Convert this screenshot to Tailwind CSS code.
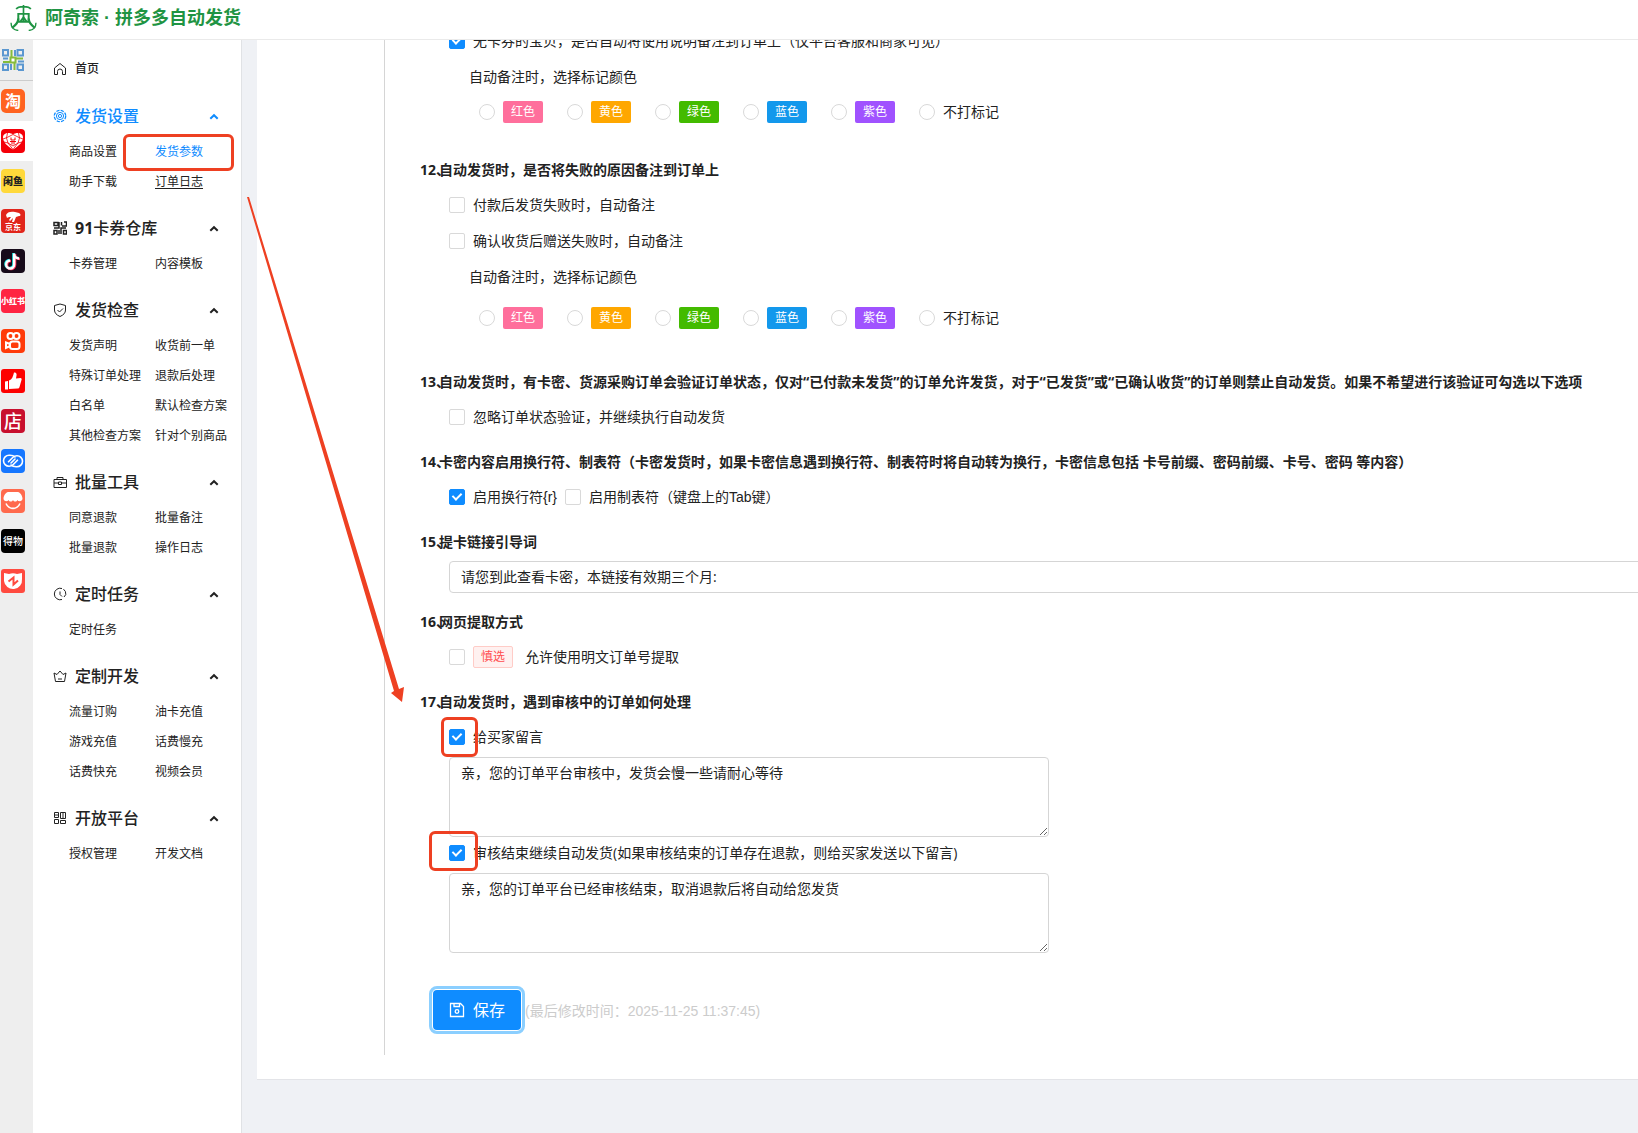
<!DOCTYPE html>
<html lang="zh-CN">
<head>
    <meta charset="UTF-8">
    <meta name="viewport" content="width=device-width, initial-scale=1.0">
    <title>阿奇索 · 拼多多自动发货</title>
    <script src="https://cdn.jsdelivr.net/npm/@tailwindcss/browser@4"></script>
</head>
<body class="relative flex h-screen flex-col overflow-hidden bg-[#eff1f5] font-['Open_Sans','Noto_Sans_CJK_SC',sans-serif] text-sm text-[#222]">
    <header class="flex h-10 shrink-0 items-center gap-2 border-b border-[#eaeaea] bg-white pb-1 pl-2.5">
        <svg class="h-[27px] w-[27px]" viewBox="0 0 26 26" fill="none" stroke="#1f9443" stroke-width="1.600">
            <path d="M6 5c1-2 3-2.500 7-2.500S19 3 20 5M13 1v16"/>
            <path d="M8 9.500h10v7.500H8zM10 17l3-4 3 4" stroke-width="1.900"/>
            <path d="M8 14c0 4-2 6-6 9M18 14c0 4 2 6 6 9" stroke-width="2.200"/>
            <path d="M1 18c0 4 2 7 7 7.500M25 18c0 4-2 7-7 7.500" stroke-width="1.300"/>
        </svg>
        <h1 class="font-['Liberation_Sans','Noto_Sans_CJK_SC',sans-serif] text-lg font-bold text-[#1f9443]">阿奇索 · 拼多多自动发货</h1>
    </header>

    <div class="flex min-h-0 flex-1">
        <!-- platform switcher -->
        <nav class="flex w-[33px] shrink-0 flex-col bg-[#eee]">
            <a href="#" aria-label="91卡券" class="flex h-[41px] items-center border-b border-[#ccc] pl-0.5">
                <svg class="h-[22px] w-[22px]" viewBox="0 0 22 22" fill="none" stroke-width="2">
                    <path d="M7 6.500H1V1h5v5M15.500 1H21v5.500h-5.500zM1 15.500h5V21H1zM15.500 21v-5.500H21V21h-5" stroke="#5b97d0"/>
                    <path d="M13 1v6M9 21v-6M1 9.500h5M16 12.500h6" stroke="#5b97d0"/>
                    <path d="M9.500 1v8M1 13h7M12.500 21v-8M21 9.500h-8" stroke="#86bc3c"/>
                    <path d="M8.500 8.500h5v5h-5z" stroke="#86bc3c" fill="#fff"/>
                </svg>
            </a>
            <a href="#" class="flex h-10 items-center pl-px"><span class="flex h-6 w-6 items-center justify-center rounded-[5px] bg-[#ff6320] text-base font-bold leading-none text-white">淘</span></a>
            <a href="#" aria-label="拼多多" class="flex h-10 items-center bg-white pl-px">
                <svg class="h-6 w-6" viewBox="0 0 24 24">
                    <rect width="24" height="24" rx="4" fill="#f40009"/>
                    <path d="M12 20.500C6 17 2 13 2 8.500C2 5.500 4.500 4 7 4c2 0 4 .5 5 1.500C13 4.500 15 4 17 4c2.500 0 5 1.500 5 4.500C22 13 18 17 12 20.500z" fill="#fff"/>
                    <path d="M2 10l4-1.500L12 5.500l6 3 4 1.500M6.500 4l-1 5L7 14l5 6.500 5-6.500 1.500-5-1-5M3 13l4 1 5 3 5-3 4-1" stroke="#f40009" stroke-width=".8" fill="none"/>
                    <path d="M10 8.500v2.500h4V8.500M9 12.500h6M11 12.500v3M13 12.500v3" stroke="#f40009" stroke-width="1" fill="none"/>
                </svg>
            </a>
            <a href="#" class="flex h-10 items-center pl-px"><span class="flex h-6 w-6 items-center justify-center rounded-[4px] bg-[#ffd93b] text-[10px] font-black leading-none text-[#222]">闲鱼</span></a>
            <a href="#" class="flex h-10 items-center pl-px">
                <span class="flex h-6 w-6 flex-col items-center rounded-[4px] bg-[#e1251b] pt-0.5 text-[8px] font-bold leading-none text-white">
                    <svg class="h-3 w-4" viewBox="0 0 16 12" fill="#fff"><path d="M1 4C2 1 6 0 10 1l4 1c2 1 2 3 0 3l-3 1-2 5H7l1-4-3 3-1-1 2-3C4 6 3 6 2 7z"/></svg>
                    京东
                </span>
            </a>
            <a href="#" aria-label="抖音" class="flex h-10 items-center pl-px">
                <svg class="h-6 w-6" viewBox="0 0 24 24" fill="none" stroke-width="2.600">
                    <rect width="24" height="24" rx="4" fill="#170b1a"/>
                    <path d="M12.500 4v11a4 4 0 1 1-4-4M12.500 4c0 3 2 5 5 5" stroke="#25f4ee"/>
                    <path d="M14 5v11a4 4 0 1 1-4-4M14 5c0 3 2 5 5 5" stroke="#fe2c55"/>
                    <path d="M13.200 4.500v11a4 4 0 1 1-4-4M13.200 4.500c0 3 2 5 5 5" stroke="#fff" stroke-width="2.400"/>
                </svg>
            </a>
            <a href="#" class="flex h-10 items-center pl-px"><span class="flex h-6 w-6 items-center justify-center whitespace-nowrap rounded-[4px] bg-[#ff2442] text-[8px] font-black leading-none text-white">小红书</span></a>
            <a href="#" aria-label="快手" class="flex h-10 items-center pl-px">
                <svg class="h-6 w-6" viewBox="0 0 24 24" fill="none" stroke="#fff" stroke-width="2">
                    <rect width="24" height="24" rx="4" fill="#ff3b0a" stroke="none"/>
                    <circle cx="9.500" cy="7" r="3"/><circle cx="15.500" cy="7" r="3"/>
                    <rect x="9" y="12.500" width="9.500" height="7.500" rx="2.500"/><path d="M9 15l-4-1.500v5.500l4-2"/>
                </svg>
            </a>
            <a href="#" aria-label="点赞" class="flex h-10 items-center pl-px">
                <svg class="h-6 w-6" viewBox="0 0 24 24" fill="#fff">
                    <rect width="24" height="24" rx="3" fill="#fd0100"/>
                    <path d="M4 12.500l3-.5v8.500H4zM8 11.500c3-1 4-4 5-8 2-.5 3 1 2.500 3L15 9.500l4.500-.5c1 0 1.500 1 1 2l-2 7c-.3 1-1 1.500-2 1.500L8 20z"/>
                </svg>
            </a>
            <a href="#" class="flex h-10 items-center pl-px"><span class="flex h-6 w-6 items-center justify-center rounded-[4px] bg-[#c8102e] text-lg font-medium leading-none text-white">店</span></a>
            <a href="#" aria-label="链接" class="flex h-10 items-center pl-px">
                <svg class="h-6 w-6" viewBox="0 0 24 24" fill="none" stroke="#fff" stroke-width="1.600" stroke-linecap="round">
                    <rect width="24" height="24" rx="4" fill="#1677ff" stroke="none"/>
                    <path d="M14 8C12 6 9.500 6.300 8 6.300a5.500 5.500 0 0 0 0 11c2 0 3-.6 4-1.600l4.500-4.500"/>
                    <path d="M10 16c2 2 4.500 1.700 6 1.700a5.500 5.500 0 0 0 0-11c-2 0-3 .6-4 1.600L7.500 12.800"/>
                    <path d="M10 14l4-4"/>
                </svg>
            </a>
            <a href="#" aria-label="微店" class="flex h-10 items-center pl-px">
                <svg class="h-6 w-6" viewBox="0 0 24 24" fill="#fff">
                    <rect width="24" height="24" rx="4" fill="#ff6a4d"/>
                    <path d="M7 3h10c2 0 4.500 4 4.500 6.500 0 3-4 3.500-5 1.500-1 2-3.500 2-4.500 0-1 2-3.500 2-4.500 0-1 2-5 1.500-5-1.500C2.500 7 5 3 7 3z"/>
                    <path d="M5 14.500c3 6.500 11 6.500 14 0" fill="none" stroke="#fff" stroke-width="1.600"/>
                </svg>
            </a>
            <a href="#" class="flex h-10 items-center pl-px"><span class="flex h-6 w-6 items-center justify-center whitespace-nowrap rounded-[4px] bg-black text-[10px] font-medium leading-none text-white">得物</span></a>
            <a href="#" aria-label="转转" class="flex h-10 items-center pl-px">
                <svg class="h-6 w-6" viewBox="0 0 24 24" fill="#fff">
                    <rect width="24" height="24" rx="3" fill="#ff4a3f"/>
                    <path d="M3 4l5 1a10 10 0 0 1 8 0l5-1v6a9 9 0 1 1-18 2z"/>
                    <path d="M7.500 12.500L12.500 8.500v7l4.500-4" fill="none" stroke="#ff4a3f" stroke-width="2"/>
                </svg>
            </a>
        </nav>

        <!-- side menu -->
        <aside class="w-[209px] shrink-0 overflow-hidden border-r border-[#e0e2e5] bg-white pt-2">
            <a href="#" class="flex h-10 items-center gap-2 pt-0.5 pl-5 text-xs font-medium">
                <svg class="h-3.5 w-3.5" viewBox="0 0 14 14" fill="none" stroke="currentColor"><path d="M1.500 6L7 1.500 12.500 6v6.500H9.500V9.500a2.500 2.500 0 0 0-5 0v3h-3z"/></svg>
                首页
            </a>
            <div id="menu" class="mt-2 flex flex-col gap-[11px]"></div>
        </aside>

        <main class="min-w-0 flex-1 overflow-hidden pl-[15px]">
            <div class="border-b border-[#e3e4e8] bg-white pb-6 pl-[127px]">
                <form class="-mt-[17px] whitespace-nowrap border-l border-[#d5d5d5] pb-[25px] pl-[35px]">
                    <section class="pl-[29px]">
                        <label class="flex h-9 items-center gap-2"><input type="checkbox" checked class="flex h-4 w-4 appearance-none items-start justify-center rounded-xs border border-[#d9d9d9] bg-white checked:border-[#0f8cff] checked:bg-[#0f8cff] checked:after:mt-px checked:after:h-[9px] checked:after:w-[6px] checked:after:rotate-45 checked:after:border-r-2 checked:after:border-b-2 checked:after:border-white">无卡券的宝贝，是否自动将使用说明备注到订单上（仅平台客服和商家可见）</label>
                        <p class="flex h-9 items-center pl-5">自动备注时，选择标记颜色</p>
                        <div data-colors="mark-a" class="flex h-[34px] items-center gap-6 pl-[30px]"></div>
                    </section>

                    <section class="mt-6">
                        <h2 class="flex h-[34px] items-center font-bold"><span class="w-[19px]">12、</span>自动发货时，是否将失败的原因备注到订单上</h2>
                        <div class="pl-[29px]">
                            <label class="flex h-9 items-center gap-2"><input type="checkbox" class="h-4 w-4 appearance-none rounded-xs border border-[#d9d9d9] bg-white">付款后发货失败时，自动备注</label>
                            <label class="flex h-9 items-center gap-2"><input type="checkbox" class="h-4 w-4 appearance-none rounded-xs border border-[#d9d9d9] bg-white">确认收货后赠送失败时，自动备注</label>
                            <p class="flex h-9 items-center pl-5">自动备注时，选择标记颜色</p>
                            <div data-colors="mark-b" class="flex h-[46px] items-center gap-6 pl-[30px]"></div>
                        </div>
                    </section>

                    <section class="mt-6">
                        <h2 class="flex h-[34px] items-center font-bold"><span class="w-[19px]">13、</span>自动发货时，有卡密、货源采购订单会验证订单状态，仅对“已付款未发货”的订单允许发货，对于“已发货”或“已确认收货”的订单则禁止自动发货。如果不希望进行该验证可勾选以下选项</h2>
                        <label class="ml-[29px] flex h-9 items-center gap-2"><input type="checkbox" class="h-4 w-4 appearance-none rounded-xs border border-[#d9d9d9] bg-white">忽略订单状态验证，并继续执行自动发货</label>
                    </section>

                    <section class="mt-2.5">
                        <h2 class="flex h-[34px] items-center font-bold"><span class="w-[19px]">14、</span>卡密内容启用换行符、制表符（卡密发货时，如果卡密信息遇到换行符、制表符时将自动转为换行，卡密信息包括 卡号前缀、密码前缀、卡号、密码 等内容）</h2>
                        <div class="flex gap-2 pl-[29px] font-['Liberation_Sans','Noto_Sans_CJK_SC',sans-serif]">
                            <label class="flex h-9 items-center gap-2"><input type="checkbox" checked class="flex h-4 w-4 appearance-none items-start justify-center rounded-xs border border-[#d9d9d9] bg-white checked:border-[#0f8cff] checked:bg-[#0f8cff] checked:after:mt-px checked:after:h-[9px] checked:after:w-[6px] checked:after:rotate-45 checked:after:border-r-2 checked:after:border-b-2 checked:after:border-white">启用换行符{r}</label>
                            <label class="flex h-9 items-center gap-2"><input type="checkbox" class="h-4 w-4 appearance-none rounded-xs border border-[#d9d9d9] bg-white">启用制表符（键盘上的Tab键）</label>
                        </div>
                    </section>

                    <section class="mt-2.5">
                        <h2 class="flex h-[34px] items-center font-bold"><span class="w-[19px]">15、</span><label for="guide">提卡链接引导词</label></h2>
                        <div class="-mr-4 flex h-9 items-center pl-[29px]">
                            <input id="guide" type="text" value="请您到此查看卡密，本链接有效期三个月:" class="h-8 w-full rounded-sm border border-[#d5d5d5] bg-white px-[11px] pb-0.5">
                        </div>
                    </section>

                    <section class="mt-2.5">
                        <h2 class="flex h-[34px] items-center font-bold"><span class="w-[19px]">16、</span>网页提取方式</h2>
                        <label class="ml-[29px] flex h-9 items-center gap-2"><input type="checkbox" class="h-4 w-4 appearance-none rounded-xs border border-[#d9d9d9] bg-white"><span class="mr-1 rounded-xs border border-[#ffccc7] bg-[#fff1f0] px-[7px] text-xs leading-5 text-[#ff4d4f]">慎选</span>允许使用明文订单号提取</label>
                    </section>

                    <section class="mt-2.5">
                        <h2 class="flex h-[34px] items-center font-bold"><span class="w-[19px]">17、</span>自动发货时，遇到审核中的订单如何处理</h2>
                        <div class="flex flex-col items-start pt-0.5 pl-[29px]">
                            <label class="relative flex h-8 items-center gap-2">
                                <input type="checkbox" checked class="flex h-4 w-4 appearance-none items-start justify-center rounded-xs border border-[#d9d9d9] bg-white checked:border-[#0f8cff] checked:bg-[#0f8cff] checked:after:mt-px checked:after:h-[9px] checked:after:w-[6px] checked:after:rotate-45 checked:after:border-r-2 checked:after:border-b-2 checked:after:border-white">给买家留言
                                <span class="absolute -top-1 -left-2 h-10 w-[37px] rounded-md border-3 border-[#ee4022]"></span>
                            </label>
                            <textarea aria-label="给买家留言" class="mt-1 block h-20 w-[600px] rounded-sm border border-[#d5d5d5] bg-white px-[11px] py-1 leading-[22px]">亲，您的订单平台审核中，发货会慢一些请耐心等待</textarea>
                            <label class="relative flex h-8 items-center gap-2">
                                <input type="checkbox" checked class="flex h-4 w-4 appearance-none items-start justify-center rounded-xs border border-[#d9d9d9] bg-white checked:border-[#0f8cff] checked:bg-[#0f8cff] checked:after:mt-px checked:after:h-[9px] checked:after:w-[6px] checked:after:rotate-45 checked:after:border-r-2 checked:after:border-b-2 checked:after:border-white">审核结束继续自动发货(如果审核结束的订单存在退款，则给买家发送以下留言)
                                <span class="absolute -top-1.5 -left-5 h-10 w-[49px] rounded-md border-3 border-[#ee4022]"></span>
                            </label>
                            <textarea aria-label="审核结束后的留言" class="mt-1 block h-20 w-[600px] rounded-sm border border-[#d5d5d5] bg-white px-[11px] py-1 leading-[22px]">亲，您的订单平台已经审核结束，取消退款后将自动给您发货</textarea>
                        </div>
                    </section>

                    <div class="mt-[37px] flex items-center gap-1 pl-[13px]">
                        <button type="button" class="flex h-10 w-[88px] items-center justify-center gap-2 rounded-sm bg-[#0f8cff] text-base text-white outline-3 outline-offset-1 outline-[#8bcfff]">
                            <svg class="h-4 w-4" viewBox="0 0 16 16" fill="none" stroke="currentColor" stroke-width="1.300"><path d="M1.500 1.500h10l3 3v10h-13zM5 1.500v3h5.500v-3"/><circle cx="8" cy="9.500" r="1.800"/></svg>
                            保存
                        </button>
                        <span class="pt-0.5 font-['Liberation_Sans','Noto_Sans_CJK_SC',sans-serif] text-[#ccc]">(最后修改时间：2025-11-25 11:37:45)</span>
                    </div>
                </form>
            </div>
        </main>
    </div>

    <!-- guide arrow from the menu to item 17 -->
    <svg class="pointer-events-none absolute top-[196px] left-[247px] h-[508px] w-[160px]" viewBox="0 0 160 508" fill="#ee4022">
        <path d="M0 1L2 1L152 493L157 491L155 506L144 497L147 495z"/>
    </svg>

    <script>
        const icons = {
            setting: '<circle cx="7" cy="7" r="1.600"/><circle cx="7" cy="7" r="3.600"/><circle cx="7" cy="7" r="5.700" stroke-width="1.300" stroke-dasharray="3.200 1.280"/>',
            code: '<path stroke-width="1.500" d="M1 1.500h4v3H1zM1 7h5V1M8.500 1v3.500M11 1h2.500v4H9M13 7H8v6M1 9.500h3v3.500H1zM6 9v4M10.500 9.500h3v3.500h-3z"/>',
            shield: '<path d="M7 1l5.500 1.500V7c0 3-2 5-5.500 6.500C3.500 12 1.500 10 1.500 7V2.500zM4.500 7l2 2 3.500-3.500"/>',
            tool: '<path d="M1 4.500h12.500v8H1zM4 4.500v-2h6v2M1 8h4.500M8.500 8H13M5.500 7h3v2.500h-3z"/>',
            clock: '<path d="M9 1.500A5.800 5.800 0 1 0 9 12.500M10.500 2.200A5.800 5.800 0 0 1 12.800 7.500L11 10M7 4.500v3l2 2"/>',
            crown: '<path d="M1 4l3 1.500L7 2l3 3.500L13 4l-1.500 8.500h-9zM5 10h4"/>',
            apps: '<path d="M1.500 1.500h4v5h-4zM7.500 1.500h5v6h-5zM1.500 8.500h4v4h-4zM7.500 9.500h5v3h-5zM1.500 4h4M10 1.500v6"/>'
        };

        const menu = [
            { title: '发货设置', icon: 'setting', active: true, items: ['商品设置', '发货参数', '助手下载', '订单日志'] },
            { title: '<span><b>91</b>卡券仓库</span>', icon: 'code', items: ['卡券管理', '内容模板'] },
            { title: '发货检查', icon: 'shield', items: ['发货声明', '收货前一单', '特殊订单处理', '退款后处理', '白名单', '默认检查方案', '其他检查方案', '针对个别商品'] },
            { title: '批量工具', icon: 'tool', items: ['同意退款', '批量备注', '批量退款', '操作日志'] },
            { title: '定时任务', icon: 'clock', items: ['定时任务'] },
            { title: '定制开发', icon: 'crown', items: ['流量订购', '油卡充值', '游戏充值', '话费慢充', '话费快充', '视频会员'] },
            { title: '开放平台', icon: 'apps', items: ['授权管理', '开发文档'] }
        ];

        function itemHtml(name) {
            if (name === '发货参数') {
                return `<a href="#" class="relative text-[#0f8cff]">${name}<span class="absolute -top-[3px] -left-8 h-[37px] w-[111px] rounded-md border-3 border-[#ee4022]"></span></a>`;
            }
            if (name === '订单日志') {
                return `<a href="#" class="underline underline-offset-2">${name}</a>`;
            }
            return `<a href="#">${name}</a>`;
        }

        document.getElementById('menu').innerHTML = menu.map(group => `
            <section>
                <button type="button" class="${group.active ? 'flex h-10 w-full items-center gap-2 pr-[22px] pl-5 text-base font-medium text-[#0f8cff]' : 'flex h-10 w-full items-center gap-2 pr-[22px] pl-5 text-base font-medium'}">
                    <svg class="h-3.5 w-3.5" viewBox="0 0 14 14" fill="none" stroke="currentColor">${icons[group.icon]}</svg>
                    ${group.title}
                    <svg class="ml-auto h-2.5 w-2.5" viewBox="0 0 10 10" fill="none" stroke="currentColor" stroke-width="2"><path d="M1.300 7.800L5 4.200l3.700 3.600"/></svg>
                </button>
                <div class="grid grid-cols-[86px_1fr] pt-px pl-9 text-xs leading-[30px] whitespace-nowrap">${group.items.map(itemHtml).join('')}</div>
            </section>`).join('');

        const colors = [
            ['红色', 'rounded-xs bg-[#ff6f9c] px-2 text-xs leading-[22px] text-white'],
            ['黄色', 'rounded-xs bg-[#ffa700] px-2 text-xs leading-[22px] text-white'],
            ['绿色', 'rounded-xs bg-[#43bb00] px-2 text-xs leading-[22px] text-white'],
            ['蓝色', 'rounded-xs bg-[#1398ec] px-2 text-xs leading-[22px] text-white'],
            ['紫色', 'rounded-xs bg-[#a052ff] px-2 text-xs leading-[22px] text-white'],
            ['不打标记', '']
        ];

        document.querySelectorAll('[data-colors]').forEach(row => {
            row.innerHTML = colors.map(([name, cls]) => `
                <label class="flex items-center gap-2">
                    <input type="radio" name="${row.dataset.colors}" class="h-4 w-4 appearance-none rounded-full border border-[#d9d9d9] bg-white">
                    <span class="${cls}">${name}</span>
                </label>`).join('');
        });
    </script>
</body>
</html>
